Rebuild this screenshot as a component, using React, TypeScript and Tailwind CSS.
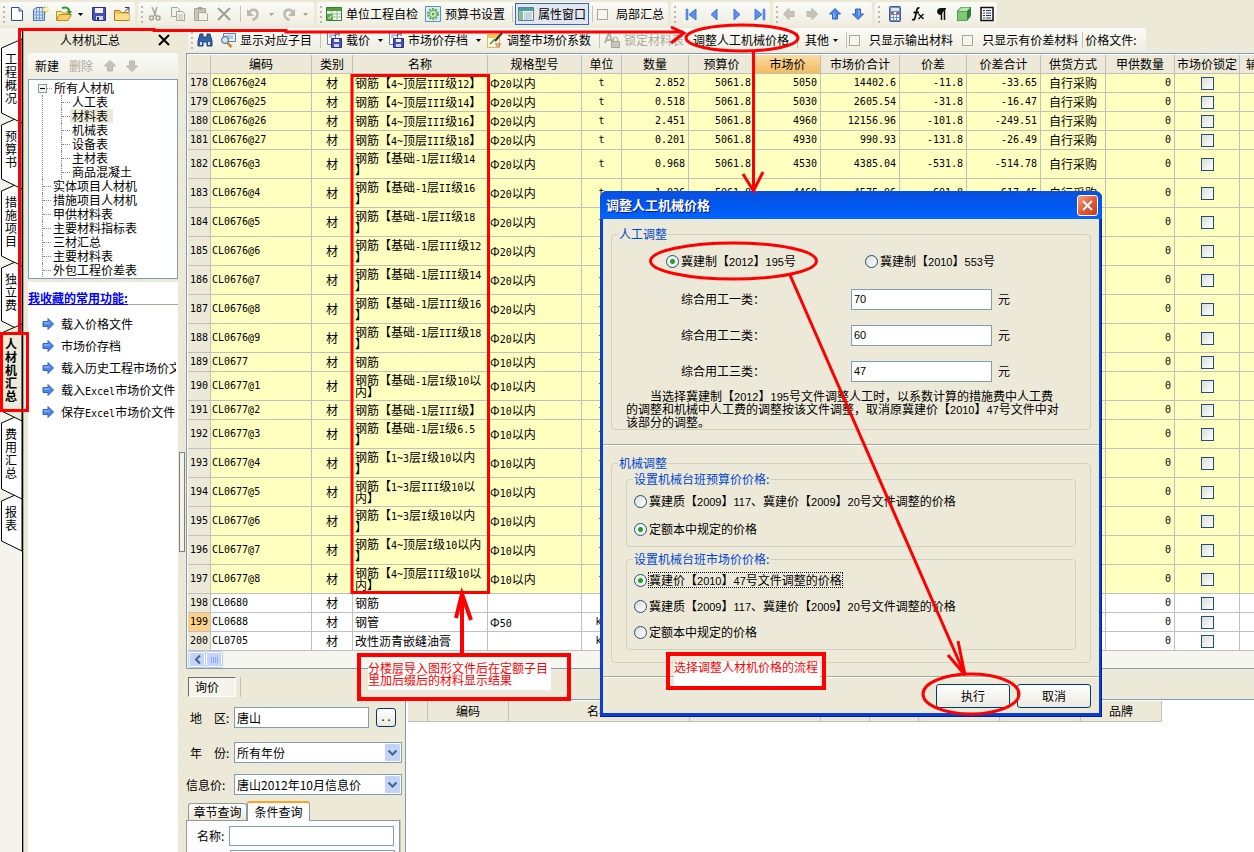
import React from "react";

type Row = {
  no: number;
  code: string;
  name: string[];
  spec: string;
  unit: string;
  qty?: string;
  budget?: string;
  market?: string;
  total?: string;
  diff?: string;
  diffTotal?: string;
  supply?: string;
};

const priced = (
  no: number,
  code: string,
  name: string[],
  qty: string,
  market: string,
  total: string,
  diff: string,
  diffTotal: string
): Row => ({ no, code, name, spec: "Φ20以内", unit: "t", qty, budget: "5061.8", market, total, diff, diffTotal, supply: "自行采购" });

const ROWS: Row[] = [
  priced(178, "CL0676@24", ["钢筋【4~顶层III级12】"], "2.852", "5050", "14402.6", "-11.8", "-33.65"),
  priced(179, "CL0676@25", ["钢筋【4~顶层III级14】"], "0.518", "5030", "2605.54", "-31.8", "-16.47"),
  priced(180, "CL0676@26", ["钢筋【4~顶层III级16】"], "2.451", "4960", "12156.96", "-101.8", "-249.51"),
  priced(181, "CL0676@27", ["钢筋【4~顶层III级18】"], "0.201", "4930", "990.93", "-131.8", "-26.49"),
  priced(182, "CL0676@3", ["钢筋【基础-1层II级14", "】"], "0.968", "4530", "4385.04", "-531.8", "-514.78"),
  priced(183, "CL0676@4", ["钢筋【基础-1层II级16", "】"], "1.026", "4460", "4575.96", "-601.8", "-617.45"),
  { no: 184, code: "CL0676@5", name: ["钢筋【基础-1层II级18", "】"], spec: "Φ20以内", unit: "t" },
  { no: 185, code: "CL0676@6", name: ["钢筋【基础-1层III级12", "】"], spec: "Φ20以内", unit: "t" },
  { no: 186, code: "CL0676@7", name: ["钢筋【基础-1层III级14", "】"], spec: "Φ20以内", unit: "t" },
  { no: 187, code: "CL0676@8", name: ["钢筋【基础-1层III级16", "】"], spec: "Φ20以内", unit: "t" },
  { no: 188, code: "CL0676@9", name: ["钢筋【基础-1层III级18", "】"], spec: "Φ20以内", unit: "t" },
  { no: 189, code: "CL0677", name: ["钢筋"], spec: "Φ10以内", unit: "t" },
  { no: 190, code: "CL0677@1", name: ["钢筋【基础-1层I级10以", "内】"], spec: "Φ10以内", unit: "t" },
  { no: 191, code: "CL0677@2", name: ["钢筋【基础-1层III级】"], spec: "Φ10以内", unit: "t" },
  { no: 192, code: "CL0677@3", name: ["钢筋【基础-1层I级6.5", "】"], spec: "Φ10以内", unit: "t" },
  { no: 193, code: "CL0677@4", name: ["钢筋【1~3层I级10以内", "】"], spec: "Φ10以内", unit: "t" },
  { no: 194, code: "CL0677@5", name: ["钢筋【1~3层III级10以", "内】"], spec: "Φ10以内", unit: "t" },
  { no: 195, code: "CL0677@6", name: ["钢筋【1~3层I级10以内", "】"], spec: "Φ10以内", unit: "t" },
  { no: 196, code: "CL0677@7", name: ["钢筋【4~顶层I级10以内", "】"], spec: "Φ10以内", unit: "t" },
  { no: 197, code: "CL0677@8", name: ["钢筋【4~顶层III级10以", "内】"], spec: "Φ10以内", unit: "t" },
  { no: 198, code: "CL0680", name: ["钢筋"], spec: "", unit: "" },
  { no: 199, code: "CL0688", name: ["钢管"], spec: "Φ50", unit: "kg" },
  { no: 200, code: "CL0705", name: ["改性沥青嵌缝油膏"], spec: "", unit: "kg" },
];

/* Latin runs are set smaller than the Chinese text so that two of them fill one full-width cell. */
const MONO = "font-['DejaVu_Sans_Mono',monospace] text-[10px]";
const SANS = "font-['Liberation_Sans',sans-serif] text-[11px]";

function Mixed({ text, latin = MONO }: { text: string; latin?: string }) {
  return (
    <>
      {text.split(/([\x21-\x7e]+)/).map((part, i) =>
        i % 2 ? (
          <span key={i} className={"leading-none " + latin}>
            {part}
          </span>
        ) : (
          part
        )
      )}
    </>
  );
}

/* ---------- icons ---------- */

function Ico({ children, className = "" }: { children: React.ReactNode; className?: string }) {
  return (
    <svg width="16" height="16" viewBox="0 0 16 16" className={"block shrink-0 " + className} aria-hidden="true">
      {children}
    </svg>
  );
}

const NewDoc = () => (
  <Ico>
    <path d="M2.500 1.500h7.500l3.500 3.500v9.500h-11z" fill="#fdfeff" stroke="#2f4f8f" />
    <path d="M10 1.500v3.500h3.500" fill="#cfdcf3" stroke="#2f4f8f" />
  </Ico>
);
const NewGrid = () => (
  <Ico>
    <path d="M.5 3.500l3-2h8v13h-11z" fill="#dce8fb" stroke="#3f6fc0" />
    <path d="M3.500 2v13M6.500 2v13M9.500 2v13M1 6h11M1 9h11M1 12h11" stroke="#6f98dd" />
    <path d="M12.500 0v8M8.500 4h7.500M10 1l5 5M15 1l-5 5" stroke="#f2c230" />
    <circle cx="12.500" cy="3.500" r="2" fill="#fff7c0" />
  </Ico>
);
const OpenIco = () => (
  <Ico>
    <path d="M.5 14.500v-9h5l1 1.500h5v3" fill="#ffe9a3" stroke="#c08a1c" />
    <path d="M.5 14.500l3-6h12l-3.500 6z" fill="#f9cf62" stroke="#c08a1c" />
    <path d="M6 2c4-1.500 7 0 7.500 4" fill="none" stroke="#2c9a2c" strokeWidth="2" />
    <path d="M10.500 5h5.500l-2.500 4z" fill="#2c9a2c" />
  </Ico>
);
const SaveIco = () => (
  <Ico>
    <path d="M1.500 1.500h13v13h-12l-1-1z" fill="#4a4fb5" stroke="#2b2f87" />
    <path d="M4 2h8v5h-8z" fill="#f2f4ff" />
    <path d="M5 10h7v4h-7z" fill="#d7daf5" />
    <path d="M6 11h2v3h-2z" fill="#2b2f87" />
  </Ico>
);
const FolderIco = () => (
  <Ico>
    <path d="M.5 14.500v-10h5l1.500 2h8v8z" fill="#f5c451" stroke="#b47c18" />
    <path d="M1 8h14v6h-14z" fill="#ffdf8b" />
    <path d="M11 1.500h4v4M15 1.500l-4 4" stroke="#2b3a77" fill="none" />
  </Ico>
);
const CutIco = () => (
  <Ico>
    <path d="M5 1l4 9M10 1l-3 9" stroke="#a8a597" strokeWidth="1.500" />
    <circle cx="4.500" cy="12" r="2" fill="none" stroke="#a8a597" strokeWidth="1.500" />
    <circle cx="11" cy="12" r="2" fill="none" stroke="#a8a597" strokeWidth="1.500" />
  </Ico>
);
const CopyIco = () => (
  <Ico>
    <path d="M1.500 1.500h6l2 2v7h-8z" fill="#f3f1e8" stroke="#a8a597" />
    <path d="M6.500 5.500h6l2 2v7h-8z" fill="#f3f1e8" stroke="#a8a597" />
    <path d="M8 9h5M8 11h5M8 13h5" stroke="#bdbaac" />
  </Ico>
);
const PasteIco = () => (
  <Ico>
    <path d="M1.500 2.500h11v12h-11z" fill="#c9c6b8" stroke="#a8a597" />
    <path d="M5 1h4v3h-4z" fill="#a8a597" />
    <path d="M5.500 6.500h7l2 2v6h-9z" fill="#f3f1e8" stroke="#a8a597" />
  </Ico>
);
const DelIco = () => (
  <Ico>
    <path d="M2 2l12 12M14 2l-12 12" stroke="#a09d90" strokeWidth="2" />
  </Ico>
);
const UndoIco = ({ flip = false }: { flip?: boolean }) => (
  <Ico className={flip ? "-scale-x-100" : ""}>
    <path d="M4 7c2-5 8.500-4 8.500 1 0 3-2 5-5 6" fill="none" stroke="#bdbaad" strokeWidth="2.500" />
    <path d="M2 3v7h7z" fill="#bdbaad" />
  </Ico>
);
const CheckTableIco = () => (
  <Ico>
    <path d="M0.500 1.500h15v13h-15z" fill="#f4fbf0" stroke="#3b7a35" />
    <path d="M1 2h14v3h-14z" fill="#4f9f3b" />
    <path d="M1 8h14M1 11h14M6 5v9M11 5v9" stroke="#a0b79a" />
    <path d="M1 8h6v6h-6z" fill="#5bb044" />
    <path d="M2 11l1.500 1.500L6 9.500" stroke="#fff" fill="none" />
  </Ico>
);
const GearIco = () => (
  <Ico>
    <path d="M.5.5h15v15h-15z" fill="#dcecf7" stroke="#5d8fb8" />
    <circle cx="8" cy="8" r="5" fill="none" stroke="#58a84a" strokeWidth="2" strokeDasharray="2 1.140" />
    <circle cx="8" cy="8" r="3.500" fill="#e8f6e2" stroke="#58a84a" />
    <circle cx="8" cy="8" r="1.500" fill="#58a84a" />
  </Ico>
);
const WindowIco = () => (
  <Ico>
    <path d="M.5 1.500h15v13h-15z" fill="#fff" stroke="#5a7da0" />
    <path d="M1 2h14v3h-14z" fill="#4aa0a8" />
    <path d="M2 7h3M2 9h3M2 11h3M2 13h3M6 7h8M6 9h8M6 11h8M6 13h8" stroke="#8ea9bd" />
    <path d="M1 5h4v9h-4z" fill="#58ab57" opacity=".6" />
  </Ico>
);
const NavIco = ({ bar, flip }: { bar?: boolean; flip?: boolean }) => (
  <Ico className={flip ? "-scale-x-100" : ""}>
    <path d={bar ? "M3 3l7 5.500L3 14z" : "M5 3l6 5.500L5 14z"} fill="#5b8fee" stroke="#3f76dd" />
    {bar && <path d="M11 3h2v11h-2z" fill="#5b8fee" stroke="#3f76dd" strokeWidth=".5" />}
  </Ico>
);
const ArrowIco = ({ dir, on = true }: { dir: "r" | "l" | "u" | "d"; on?: boolean }) => {
  const rot = { r: "", l: "rotate-180", u: "-rotate-90", d: "rotate-90" }[dir];
  return (
    <Ico className={rot}>
      <path d="M3 5.500h5v-3l5.500 5.500-5.500 5.500v-3h-5z" fill={on ? "#4c84ec" : "#c6c4b9"} stroke={on ? "#3163c6" : "#b9b6aa"} />
      {on && <path d="M4 7h5.500" stroke="#a9c8fb" />}
    </Ico>
  );
};
const CalcIco = () => (
  <Ico>
    <rect x="2.500" y=".5" width="11" height="15" rx="1" fill="#6d8fd0" stroke="#3d5a99" />
    <path d="M4 2h8v3h-8z" fill="#dbe8ff" />
    <path d="M4 7h8M4 10h8M4 13h8" stroke="#fff" strokeWidth="2" strokeDasharray="2 1" />
    <path d="M4 7h2M10 7h2" stroke="#e04343" strokeWidth="2" />
  </Ico>
);
const FxIco = () => (
  <Ico>
    <path d="M9.500 2C7.500 1.500 7 3 6.500 5.500L5 12c-.4 1.800-1.500 2-3 1.500M3.500 6.500h5.500" fill="none" stroke="#111" strokeWidth="1.800" />
    <path d="M8.500 8l5 5M13.500 8l-5 5" stroke="#111" strokeWidth="1.400" />
  </Ico>
);
const ParaIco = () => (
  <Ico>
    <path d="M13 2.500H7.500a3 3 0 000 6H8" fill="#111" stroke="#111" />
    <path d="M8.500 2v12M11.500 2v12" stroke="#111" strokeWidth="1.500" />
  </Ico>
);
const CubeIco = () => (
  <Ico>
    <path d="M1 5l4-4h10v9l-4 5h-10z" fill="#2f7d33" />
    <path d="M1.500 5.500h9.500v9h-9.500z" fill="#7cc876" />
    <path d="M2 5l3.500-3.500h9L11 5z" fill="#b8e6b0" />
  </Ico>
);
const ListIco = () => (
  <Ico>
    <path d="M2 1.500h12v13h-12z" fill="#fff" stroke="#111" strokeWidth="1.500" />
    <path d="M4 4.500h2M4 7h2M4 9.500h2M4 12h2M7 4.500h5M7 7h5M7 9.500h5M7 12h5" stroke="#1a2a9c" />
  </Ico>
);
const BinoIco = () => (
  <Ico>
    <path d="M3 2h3v3h4V2h3l2 7v5h-5v-4H6v4H1V9z" fill="#2f62a8" stroke="#1d4179" />
    <path d="M3 10h2v3H3zM11 10h2v3h-2z" fill="#cfe0f7" />
  </Ico>
);
const FindIco = () => (
  <Ico>
    <path d="M3.500 1.500h12v8h-12z" fill="#eaf2fb" stroke="#5d7fa8" />
    <path d="M6 4h7M6 6h7" stroke="#7f9dc0" />
    <circle cx="5" cy="8" r="3.500" fill="#cfe4fa" stroke="#3b5b86" />
    <path d="M7.500 11l4 4" stroke="#c98d2c" strokeWidth="2.500" />
  </Ico>
);
const PriceSaveIco = () => (
  <Ico>
    <path d="M1.500.5h8v12h-8z" fill="#fff" stroke="#5b7fb8" />
    <path d="M3 3h5M3 5h3" stroke="#6c93d0" />
    <path d="M8 4l5-3v3" stroke="#2456b8" fill="none" />
    <path d="M5.500 6.500h10v9h-10z" fill="#4a4fb5" stroke="#2b2f87" />
    <path d="M8 7h5v3h-5z" fill="#eef" />
    <path d="M8 12h5v3h-5z" fill="#cdd1f2" />
  </Ico>
);
const EditIco = () => (
  <Ico>
    <path d="M.5 2.500h12v13h-12z" fill="#fff8e2" stroke="#e0b860" />
    <path d="M1 3h11v3h-11z" fill="#f5c451" />
    <path d="M8 9l7-8" stroke="#333" strokeWidth="2" />
    <path d="M3 12l5-5" stroke="#3a8a3a" strokeWidth="1.500" />
    <path d="M8 12h6M9 14h4" stroke="#cf4b2a" />
  </Ico>
);
const LockIco = () => (
  <Ico>
    <path d="M1 11L4.500 2h1L9 11M2.500 8h5" stroke="#b3b0a3" strokeWidth="2" fill="none" />
    <path d="M7.500 9.500h8v6h-8z" fill="#c9c6b9" stroke="#a8a597" />
    <path d="M9.500 9V7a2 2 0 014 0v2" fill="none" stroke="#a8a597" />
  </Ico>
);

const Caret = ({ dim = false, className = "" }: { dim?: boolean; className?: string }) => (
  <svg width="5" height="3" viewBox="0 0 5 3" className={"block shrink-0 " + className} aria-hidden="true">
    <path d="M0 0h5L2.500 3z" fill={dim ? "#a8a597" : "#000"} />
  </svg>
);

const Grip = () => (
  <span className="flex shrink-0 flex-col gap-[3px]">
    <i className="h-[2px] w-[2px] bg-[#bdb9a6]" />
    <i className="h-[2px] w-[2px] bg-[#bdb9a6]" />
    <i className="h-[2px] w-[2px] bg-[#bdb9a6]" />
    <i className="h-[2px] w-[2px] bg-[#bdb9a6]" />
  </span>
);
const Sep = ({ className = "" }: { className?: string }) => (
  <span className={"w-px shrink-0 bg-[#c5c2b2] " + (className.includes("h-5") ? "" : "h-4 ") + className} />
);

function Tool({ label, className = "", children }: { label: string; className?: string; children: React.ReactNode }) {
  return (
    <button type="button" aria-label={label} className={"flex shrink-0 items-center gap-1 whitespace-nowrap " + className}>
      {children}
    </button>
  );
}

function Group({ className = "", children }: { className?: string; children: React.ReactNode }) {
  return (
    <div className={"flex h-6 shrink-0 items-center rounded-[3px] bg-linear-to-b from-[#fbfbf8] to-[#efede1] pl-[3px] " + className}>
      {children}
    </div>
  );
}

const flatCheck = "h-[11px] w-[11px] shrink-0 appearance-none border border-[#aca899] bg-[#f6f5ee]";

function TopToolbar() {
  return (
    <div className="flex h-7 shrink-0 items-center gap-[3px] overflow-hidden">
      <Group className="w-[135px]">
        <Grip />
        <Tool label="新建工程" className="ml-1"><NewDoc /></Tool>
        <Tool label="新建表格" className="ml-2"><NewGrid /></Tool>
        <Tool label="打开" className="ml-[7px]"><OpenIco /><Caret className="ml-[2px]" /></Tool>
        <Tool label="保存" className="ml-2"><SaveIco /></Tool>
        <Tool label="文件夹" className="ml-[7px]"><FolderIco /></Tool>
      </Group>
      <Group className="w-[176px]">
        <Grip />
        <Tool label="剪切" className="ml-1"><CutIco /></Tool>
        <Tool label="复制" className="ml-[7px]"><CopyIco /></Tool>
        <Tool label="粘贴" className="ml-[7px]"><PasteIco /></Tool>
        <Tool label="删除行" className="ml-[7px]"><DelIco /></Tool>
        <Sep className="ml-2" />
        <Tool label="撤销" className="ml-1"><UndoIco /><Caret dim className="ml-1" /></Tool>
        <Tool label="重做" className="ml-[7px]"><UndoIco flip /><Caret dim className="ml-[2px]" /></Tool>
      </Group>
      <Group className="w-[351px]">
        <Grip />
        <Tool label="单位工程自检" className="ml-1"><CheckTableIco />单位工程自检</Tool>
        <Tool label="预算书设置" className="ml-[7px]"><GearIco />预算书设置</Tool>
        <Sep className="ml-[7px]" />
        <Tool label="属性窗口" className="ml-[2px] h-[22px] border border-[#316ac5] bg-[#e1e6f0] px-[2px]"><WindowIco />属性窗口</Tool>
        <Sep className="ml-[3px]" />
        <label className="ml-1 flex items-center gap-2 whitespace-nowrap">
          <input type="checkbox" className={flatCheck} />局部汇总
        </label>
      </Group>
      <Group className="w-[99px] gap-[7px]">
        <Grip />
        <Tool label="首条"><NavIco bar flip /></Tool>
        <Tool label="上一条"><NavIco flip /></Tool>
        <Tool label="下一条"><NavIco /></Tool>
        <Tool label="末条"><NavIco bar /></Tool>
      </Group>
      <Group className="w-[99px] gap-[7px]">
        <Grip />
        <Tool label="左移" className="-ml-1"><ArrowIco dir="l" on={false} /></Tool>
        <Tool label="右移"><ArrowIco dir="r" on={false} /></Tool>
        <Tool label="上移"><ArrowIco dir="u" /></Tool>
        <Tool label="下移"><ArrowIco dir="d" /></Tool>
      </Group>
      <Group className="w-[122px] gap-[7px]">
        <Grip />
        <Tool label="计算器"><CalcIco /></Tool>
        <Tool label="函数"><FxIco /></Tool>
        <Tool label="段落"><ParaIco /></Tool>
        <Tool label="图形"><CubeIco /></Tool>
        <Tool label="列表"><ListIco /></Tool>
      </Group>
    </div>
  );
}

function GridToolbar() {
  return (
    <div className="flex h-[25px] shrink-0 items-start pl-[2px]">
      <Group className="pr-[10px]">
        <Grip />
        <Tool label="查找" className="ml-1"><BinoIco /></Tool>
        <Tool label="显示对应子目" className="ml-[7px]"><FindIco />显示对应子目</Tool>
        <Sep className="ml-2" />
        <Tool label="载价" className="ml-[5px]"><PriceSaveIco />载价<Caret className="ml-1" /></Tool>
        <Tool label="市场价存档" className="ml-[5px]"><PriceSaveIco />市场价存档<Caret className="ml-1" /></Tool>
        <Tool label="调整市场价系数" className="ml-[6px]"><EditIco />调整市场价系数</Tool>
        <Sep className="ml-2" />
        <Tool label="锁定材料表" className="ml-1 text-[#aca899]"><LockIco />锁定材料表</Tool>
        <Tool label="调整人工机械价格" className="ml-[9px]">调整人工机械价格</Tool>
        <Sep className="ml-2" />
        <Tool label="其他" className="ml-[7px]">其他<Caret /></Tool>
        <Sep className="ml-2" />
        <label className="ml-[2px] flex items-center gap-[9px] whitespace-nowrap">
          <input type="checkbox" className={flatCheck} />只显示输出材料
        </label>
        <label className="ml-[9px] flex items-center gap-[9px] whitespace-nowrap">
          <input type="checkbox" className={flatCheck} />只显示有价差材料
        </label>
        <Sep className="ml-1" />
        <span className="ml-[2px] whitespace-nowrap">价格文件:</span>
      </Group>
    </div>
  );
}

/* ---------- left side ---------- */

const SIDE_TABS = [
  { text: "工程概况", h: 77, z: "z-[7]", cls: "h-[77px]" },
  { text: "预算书", h: 66, z: "z-[6]", cls: "h-[66px]" },
  { text: "措施项目", h: 77, z: "z-[5]", cls: "h-[77px]" },
  { text: "独立费", h: 65, z: "z-[4]", cls: "h-[65px]" },
  { text: "人材机汇总", h: 90, z: "z-[8]", cls: "h-[90px]" },
  { text: "费用汇总", h: 78, z: "z-[3]", cls: "h-[78px]" },
  { text: "报表", h: 52, z: "z-[2]", cls: "h-[52px]" },
];

function SideTabs() {
  return (
    <nav className="flex w-[23px] shrink-0 flex-col border-r border-black bg-[#f5f4ec] pt-5">
      {SIDE_TABS.map((t) => {
        const active = t.text === "人材机汇总";
        return (
          <button
            key={t.text}
            type="button"
            className={"relative flex w-full shrink-0 justify-center pt-1 text-[12px] leading-[13px] " + t.z + " " + t.cls + (active ? " font-bold" : "")}
          >
            <svg width="23" height={t.h} className="absolute left-0 top-0 overflow-visible" aria-hidden="true">
              <polygon
                points={`1.5,0 22,-9 22,${t.h - 2} 1.5,${t.h - 12}`}
                fill={active ? "#ece9d8" : "#fff"}
                stroke="#000"
              />
            </svg>
            <span className="relative flex flex-col items-center">
              {Array.from(t.text).map((c, i) => (
                <span key={i}>{c}</span>
              ))}
            </span>
          </button>
        );
      })}
    </nav>
  );
}

const CHILDREN = ["人工表", "材料表", "机械表", "设备表", "主材表", "商品混凝土"];
const ROOTS = ["实体项目人材机", "措施项目人材机", "甲供材料表", "主要材料指标表", "三材汇总", "主要材料表", "外包工程价差表"];
const LINKS = ["载入价格文件", "市场价存档", "载入历史工程市场价文件", "载入Excel市场价文件", "保存Excel市场价文件"];
const dotted = "border-dotted border-[#8a8a8a]";

function SidePanel() {
  return (
    <aside className="flex w-[155px] shrink-0 flex-col border-l border-[#aca899] pl-1">
      <div className="flex h-6 shrink-0 items-center pl-8">
        <h2>人材机汇总</h2>
        <button type="button" aria-label="关闭面板" className="ml-[38px]">
          <svg width="12" height="12" viewBox="0 0 12 12" className="block">
            <path d="M1 1l10 10M11 1L1 11" stroke="#000" strokeWidth="2" />
          </svg>
        </button>
      </div>
      <div className="mt-px flex h-[26px] shrink-0 items-center rounded-[3px] bg-linear-to-b from-[#fbfbf8] to-[#efede1] pl-[7px]">
        <button type="button">新建</button>
        <button type="button" className="ml-[10px] text-[#aca899]">删除</button>
        <button type="button" aria-label="上移" className="ml-[9px]"><ArrowIco dir="u" on={false} /></button>
        <button type="button" aria-label="下移" className="ml-[6px]"><ArrowIco dir="d" on={false} /></button>
      </div>
      <div className="h-[200px] shrink-0 border border-[#7f9db9] bg-white pt-px leading-[14px]">
        <div className="flex h-[14px] items-center">
          <button type="button" aria-label="折叠" className="ml-[9px] flex h-[9px] w-[9px] items-center justify-center border border-[#7f9db9] bg-[#f2f0e8]">
            <i className="h-px w-[5px] bg-black" />
          </button>
          <i className={"w-[5px] border-t " + dotted} />
          <span className="ml-[2px]">所有人材机</span>
        </div>
        <ul className={"ml-[13px] border-l pl-[18px] " + dotted}>
          {CHILDREN.map((c) => (
            <li key={c} className={"flex h-[14px] items-center border-l " + dotted}>
              <i className={"w-2 border-t " + dotted} />
              <span className={c === "材料表" ? "bg-[#ece9d8] pl-[2px] pr-[5px]" : "pl-[2px]"}>{c}</span>
            </li>
          ))}
        </ul>
        <ul className="ml-[13px]">
          {ROOTS.map((c) => (
            <li key={c} className={"flex h-[14px] items-center border-l " + dotted}>
              <i className={"w-2 border-t " + dotted} />
              <span className="ml-[2px]">{c}</span>
            </li>
          ))}
        </ul>
      </div>
      <div className="mt-[3px] flex-1 bg-white pt-2">
        <h3 className="h-[15px] border-b border-[#aca899] font-bold leading-[15px] text-[#0000ff] underline">我收藏的常用功能:</h3>
        <ul className="mr-[2px] mt-2 overflow-hidden">
          {LINKS.map((l) => (
            <li key={l} className="h-[22px]">
              <a href="#" className="flex h-full items-center gap-[5px] whitespace-nowrap pl-3">
                <ArrowIco dir="r" />
                <span className="h-[14px]"><Mixed text={l} /></span>
              </a>
            </li>
          ))}
        </ul>
      </div>
    </aside>
  );
}

/* ---------- grid ---------- */

const COLS: [string, string][] = [
  ["", "w-[23px]"],
  ["编码", "w-[101px]"],
  ["类别", "w-[41px]"],
  ["名称", "w-[135px]"],
  ["规格型号", "w-[94px]"],
  ["单位", "w-[40px]"],
  ["数量", "w-[67px]"],
  ["预算价", "w-[66px]"],
  ["市场价", "w-[66px]"],
  ["市场价合计", "w-[79px]"],
  ["价差", "w-[67px]"],
  ["价差合计", "w-[74px]"],
  ["供货方式", "w-[65px]"],
  ["甲供数量", "w-[69px]"],
  ["市场价锁定", "w-[65px]"],
  ["辅助材料", "w-[60px]"],
];

const NUM = "pr-[3px] text-right " + MONO;

function MaterialGrid() {
  return (
    <div className="shrink-0 overflow-hidden border border-r-0 border-[#7f9db9] bg-white pl-px pt-px">
      <table className="w-[1112px] table-fixed border-separate border-spacing-0">
        <thead>
          <tr>
            {COLS.map(([c, w], i) => (
              <th
                key={i}
                className={
                  "h-[19px] whitespace-nowrap border-b border-r border-[#c0c0c0] p-0 font-normal " +
                  w +
                  (c === "市场价" ? " bg-linear-to-b from-[#fbdca4] to-[#f3bb5c]" : " bg-[#ece9d8]") +
                  (i === COLS.length - 1 ? " pl-[6px] text-left" : "")
                }
              >
                {c}
              </th>
            ))}
          </tr>
        </thead>
        <tbody>
          {ROWS.map((r) => {
            const cell =
              "whitespace-nowrap border-b border-r border-[#c0c0c0] p-0 " +
              (r.name.length > 1 ? "h-[29px] " : "h-[19px] ") +
              (r.no > 197 ? "bg-white " : "bg-[#ffffc0] ");
            return (
              <tr key={r.no}>
                <td
                  className={
                    "border-b border-r border-[#c0c0c0] p-0 text-center " + MONO + (r.no === 199 ? " bg-[#ffd08a]" : " bg-[#ece9d8]")
                  }
                >
                  {r.no}
                </td>
                <td className={cell + "pl-px " + MONO}>{r.code}</td>
                <td className={cell + "text-center"}>材</td>
                <td className={cell + "pl-[2px] leading-[12px]"}>
                  {r.name.map((n, i) => (
                    <span key={i} className="block h-3">
                      <Mixed text={n} />
                    </span>
                  ))}
                </td>
                <td className={cell + "pl-[2px]"}><Mixed text={r.spec} /></td>
                <td className={cell + "text-center " + MONO}>{r.unit}</td>
                <td className={cell + NUM}>{r.qty}</td>
                <td className={cell + NUM}>{r.budget}</td>
                <td className={cell + NUM}>{r.market}</td>
                <td className={cell + NUM}>{r.total}</td>
                <td className={cell + NUM}>{r.diff}</td>
                <td className={cell + NUM}>{r.diffTotal}</td>
                <td className={cell + "text-center"}>{r.supply}</td>
                <td className={cell + NUM}>0</td>
                <td className={cell + "text-center"}>
                  <input
                    type="checkbox"
                    aria-label={"锁定 " + r.no}
                    className="mx-auto block h-[13px] w-[13px] appearance-none border border-[#1c5180] bg-linear-to-br from-[#dcdcd7] to-white"
                  />
                </td>
                <td className={cell} />
              </tr>
            );
          })}
        </tbody>
      </table>
      <div className="flex h-[17px] items-center gap-px bg-[#f6f5f0] pl-px">
        <button type="button" aria-label="向左滚动" className="flex h-[15px] w-4 items-center justify-center rounded-[2px] border border-white bg-[#c3d3fb] outline-1 outline-[#b4c8f6]">
          <svg width="7" height="9" viewBox="0 0 7 9"><path d="M6 0.500L2 4.500l4 4" stroke="#4d6185" strokeWidth="2" fill="none" /></svg>
        </button>
        <div className="flex h-[15px] w-4 items-center justify-center gap-px rounded-[2px] border border-white bg-[#c3d3fb] outline-1 outline-[#b4c8f6]">
          <i className="h-[6px] w-px bg-[#8cb0f8]" />
          <i className="h-[6px] w-px bg-[#8cb0f8]" />
          <i className="h-[6px] w-px bg-[#8cb0f8]" />
          <i className="h-[6px] w-px bg-[#8cb0f8]" />
        </div>
      </div>
    </div>
  );
}

/* ---------- price enquiry ---------- */

function Combo({ id, value }: { id: string; value: string }) {
  return (
    <div className="relative w-[168px]">
      <select id={id} className="block h-[21px] w-full appearance-none border border-[#7f9db9] bg-white pl-[2px] text-[12px] leading-[14px]">
        <option>{value}</option>
      </select>
      <span className="pointer-events-none absolute right-[2px] top-[2px] flex h-[17px] w-[15px] items-center justify-center rounded-[1px] bg-[#c1d2fb]">
        <svg width="9" height="6" viewBox="0 0 9 6"><path d="M.5.5l4 4 4-4" stroke="#4d6185" strokeWidth="2" fill="none" /></svg>
      </span>
    </div>
  );
}

const QUOTE_COLS: [string, string][] = [
  ["", "w-[20px]"],
  ["编码", "w-[81px]"],
  ["名称", "w-[181px]"],
  ["规格型号", "w-[131px]"],
  ["单位", "w-[49px]"],
  ["价格", "w-[49px]"],
  ["供应商", "w-[81px]"],
  ["产地", "w-[81px]"],
  ["品牌", "w-[81px]"],
];

function Enquiry() {
  return (
    <section className="flex min-h-0 flex-1 flex-col">
      <div className="flex h-[30px] shrink-0 items-end pb-[2px] pl-[2px]">
        <button type="button" className="h-[20px] w-[48px] border border-b-white border-l-[#716f64] border-r-white border-t-[#716f64] bg-[#f5f4ec] pl-[6px] text-left">
          询价
        </button>
        <Sep className="ml-1 h-5" />
      </div>
      <div className="flex min-h-0 flex-1">
        <form className="flex w-[219px] shrink-0 flex-col pt-2">
          <div className="flex items-center">
            <label htmlFor="area" className="w-12 whitespace-nowrap pl-1">地　区:</label>
            <input id="area" defaultValue="唐山" className="h-[21px] w-[135px] border border-[#7f9db9] bg-white pl-[2px]" />
            <button type="button" className={"ml-[7px] h-[19px] w-[20px] rounded-[3px] border border-[#003c74] bg-linear-to-b from-white to-[#ebe9df] leading-[14px] " + MONO}>
              ..
            </button>
          </div>
          <div className="mt-[14px] flex items-center">
            <label htmlFor="year" className="w-12 whitespace-nowrap pl-1">年　份:</label>
            <Combo id="year" value="所有年份" />
          </div>
          <div className="mt-[11px] flex items-center">
            <label htmlFor="info" className="w-12 whitespace-nowrap">信息价:</label>
            <Combo id="info" value="唐山2012年10月信息价" />
          </div>
          <div className="mt-[6px] flex h-[19px] items-end pl-[2px]">
            <button type="button" className="h-[17px] w-[59px] rounded-t-[3px] border border-b-0 border-[#919b9c] bg-linear-to-b from-white to-[#ece9d8]">章节查询</button>
            <button type="button" className="z-[1] -mb-px h-[20px] w-[63px] rounded-t-[3px] border border-b-0 border-t-2 border-[#919b9c] border-t-[#ffa21f] bg-[#fcfcfe]">条件查询</button>
          </div>
          <div className="w-[214px] flex-1 border border-b-0 border-[#919b9c] bg-[#fcfcfe] pt-[5px] shadow-[1px_0_0_#c9c6b8]">
            <div className="flex items-center pl-[10px]">
              <label htmlFor="qname" className="w-8 whitespace-nowrap">名称:</label>
              <input id="qname" className="h-[20px] w-[165px] border border-[#7f9db9] bg-white" />
            </div>
            <input aria-label="规格" className="ml-[43px] mt-1 block h-[20px] w-[165px] border border-[#7f9db9] bg-white" />
          </div>
        </form>
        <div className="min-w-0 flex-1 overflow-hidden border-l border-t border-[#7f9db9] bg-white pl-[2px] pt-px">
          <table className="w-[754px] table-fixed border-separate border-spacing-0">
            <thead>
              <tr>
                {QUOTE_COLS.map(([c, w], i) => (
                  <th key={i} className={"h-[21px] border-b border-r border-[#c0c0c0] bg-[#ece9d8] p-0 font-normal " + w}>{c}</th>
                ))}
              </tr>
            </thead>
          </table>
        </div>
      </div>
    </section>
  );
}

/* ---------- dialog ---------- */

function Radio({ name, label, checked, focus, className = "" }: { name: string; label: string; checked?: boolean; focus?: boolean; className?: string }) {
  return (
    <label className={"flex h-5 items-center gap-[2px] whitespace-nowrap " + className}>
      <input
        type="radio"
        name={name}
        defaultChecked={checked}
        className="h-[13px] w-[13px] shrink-0 appearance-none rounded-full border border-[#1c5180] bg-linear-to-br from-[#dcdcd7] to-white checked:bg-[radial-gradient(circle,#21a121_2px,#f4f4f0_3px)]"
      />
      <span className={"h-[14px]" + (focus ? " outline-1 outline-dotted outline-black" : "")}>
        <Mixed text={label} latin={SANS} />
      </span>
    </label>
  );
}

function WageRow({ id, label, value }: { id: string; label: string; value: string }) {
  return (
    <div className="flex h-9 items-center pl-[69px]">
      <label htmlFor={id} className="w-[170px]">{label}</label>
      <input id={id} defaultValue={value} className={"h-[21px] w-[141px] border border-[#7f9db9] bg-white pl-[2px] " + SANS} />
      <span className="ml-[6px]">元</span>
    </div>
  );
}

const frame = "rounded-[4px] border border-[#d0d0bf]";
const legend = "h-[14px] px-px leading-[14px] text-[#0046d5]";
const dlgButton = "h-6 w-[74px] rounded-[3px] border border-[#003c74] bg-linear-to-b from-white to-[#ebe9df]";
const rule = "h-[2px] border-b border-t border-b-white border-t-[#aca899]";
const noteLine = "block h-[13px] whitespace-nowrap";

function PriceDialog() {
  return (
    <div role="dialog" aria-label="调整人工机械价格" className="absolute left-[600px] top-[191px] z-20 w-[502px] rounded-t-[7px] bg-[#0a3fd0] px-[3px] pb-1 shadow-[inset_-1px_-1px_0_#001ea0]">
      <div className="-mx-[3px] flex h-7 items-center rounded-t-[7px] bg-linear-to-b from-[#0b4fe0] via-[#0058ee] to-[#0064ff] pl-[6px] pr-1">
        <h2 className="flex-1 text-[13px] font-bold text-white text-shadow-[1px_1px_0_#0a1883]">调整人工机械价格</h2>
        <button type="button" aria-label="关闭" className="flex h-[21px] w-[21px] items-center justify-center rounded-[3px] border border-white bg-linear-to-br from-[#f0a088] via-[#e2593a] to-[#c83c12]">
          <svg width="11" height="11" viewBox="0 0 11 11"><path d="M1 1l9 9M10 1l-9 9" stroke="#fff" strokeWidth="2" /></svg>
        </button>
      </div>
      <div className="flex flex-col bg-[#ece9d8] pb-[5px] pt-2">
        <fieldset className={"mx-2 pb-px " + frame}>
          <legend className={"ml-[6px] " + legend}>人工调整</legend>
          <div className="mt-[10px] flex pl-[54px]">
            <Radio name="doc" label="冀建制【2012】195号" checked className="w-[199px]" />
            <Radio name="doc" label="冀建制【2010】553号" />
          </div>
          <div className="mt-[10px]">
            <WageRow id="w1" label="综合用工一类：" value="70" />
            <WageRow id="w2" label="综合用工二类：" value="60" />
            <WageRow id="w3" label="综合用工三类：" value="47" />
          </div>
          <p className="pl-[14px] leading-[13px]">
            <span className={noteLine + " indent-6"}><Mixed latin={SANS} text="当选择冀建制【2012】195号文件调整人工时，以系数计算的措施费中人工费" /></span>
            <span className={noteLine}><Mixed latin={SANS} text="的调整和机械中人工费的调整按该文件调整，取消原冀建价【2010】47号文件中对" /></span>
            <span className={noteLine}>该部分的调整。</span>
          </p>
        </fieldset>
        <div className={"mt-[14px] " + rule} />
        <fieldset className={"mx-2 mt-[10px] px-[14px] pb-3 " + frame}>
          <legend className={"-ml-2 " + legend}>机械调整</legend>
          <fieldset className={"mt-[2px] pb-[7px] pl-[7px] " + frame}>
            <legend className={"-ml-px " + legend}>设置机械台班预算价价格:</legend>
            <div className="mt-[5px] flex flex-col gap-2">
              <Radio name="budget" label="冀建质【2009】117、冀建价【2009】20号文件调整的价格" />
              <Radio name="budget" label="定额本中规定的价格" checked />
            </div>
          </fieldset>
          <fieldset className={"mt-[5px] pb-[7px] pl-[7px] " + frame}>
            <legend className={"-ml-px " + legend}>设置机械台班市场价价格:</legend>
            <div className="mt-1 flex flex-col gap-[6px]">
              <Radio name="market" label="冀建价【2010】47号文件调整的价格" checked focus />
              <Radio name="market" label="冀建质【2009】117、冀建价【2009】20号文件调整的价格" />
              <Radio name="market" label="定额本中规定的价格" />
            </div>
          </fieldset>
        </fieldset>
        <div className={"mt-[13px] " + rule} />
        <div className="mt-[6px] flex justify-end gap-[7px] pr-2">
          <button type="button" className={dlgButton}>执行</button>
          <button type="button" className={dlgButton}>取消</button>
        </div>
      </div>
    </div>
  );
}

/* ---------- hand-drawn annotations ---------- */

function Annotations() {
  return (
    <>
      <svg width="1254" height="852" className="pointer-events-none absolute left-0 top-0 z-30" aria-hidden="true">
        <g fill="none" stroke="#ff0000" strokeWidth="3">
          <path d="M19.500 333V29.500H154V30.500H286V32H683" />
          <path d="M671 27l13 6-13 10" />
          <rect x="1.500" y="333.500" width="26" height="77" />
          <ellipse cx="742" cy="38" rx="56" ry="13" />
          <path d="M753.500 52V190M743 174l10.500 17L763 172" />
          <rect x="352" y="75.500" width="136.500" height="517" />
          <ellipse cx="733.500" cy="261" rx="83" ry="18" />
          <path d="M790 275L965 675M948 655l17 20-7-34" />
          <ellipse cx="971" cy="694" rx="48" ry="20" />
          <path d="M462 654V596M456 618l6-24 9 26" strokeWidth="4" />
        </g>
      </svg>
      <div className="absolute left-[357px] top-[653px] z-30 h-12 w-[214px] border-4 border-[#ff0000] px-[7px] pt-[5px] leading-[12px] text-[#ff0000]">
        <p className="h-7 w-[183px] whitespace-nowrap bg-white">
          分楼层导入图形文件后在定额子目
          <br />
          里加后缀后的材料显示结果
        </p>
      </div>
      <div className="absolute left-[666px] top-[652px] z-30 h-[38px] w-[160px] border-4 border-[#ff0000] pl-1 pt-[5px] leading-[12px] text-[#ff0000]">
        <p className="h-[25px] w-[146px] whitespace-nowrap bg-white">选择调整人材机价格的流程</p>
      </div>
    </>
  );
}

export default function App() {
  return (
    <div className="relative flex h-screen w-full flex-col overflow-hidden bg-[#ece9d8] font-['Noto_Sans_CJK_SC',sans-serif] text-[12px] leading-[14px] text-black">
      <TopToolbar />
      <div className="flex min-h-0 flex-1">
        <SideTabs />
        <SidePanel />
        <div className="flex w-2 shrink-0 flex-col justify-start pt-[424px]">
          <div className="ml-px h-[100px] w-[6px] border border-[#7f7f7f] bg-[#f3f1e8]" />
        </div>
        <main className="flex min-w-0 flex-1 flex-col">
          <GridToolbar />
          <MaterialGrid />
          <Enquiry />
        </main>
      </div>
      <PriceDialog />
      <Annotations />
    </div>
  );
}
